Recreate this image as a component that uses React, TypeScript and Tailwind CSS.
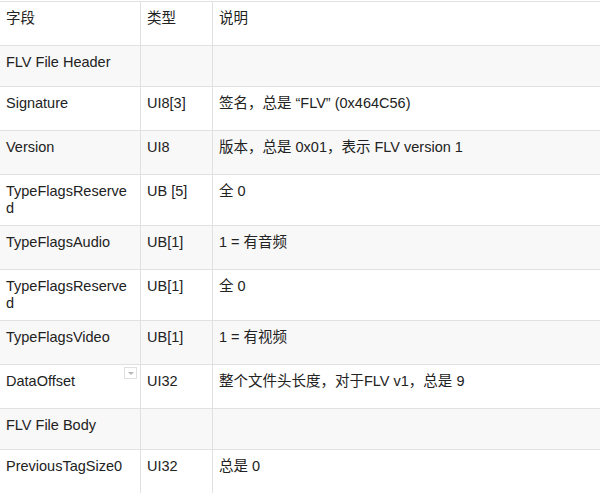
const rows = [
  { f: '字段', t: '类型', d: '说明', h: 'h-[44px]', gray: false },
  { f: 'FLV File Header', t: '', d: '', h: 'h-[41px]', gray: true },
  { f: 'Signature', t: 'UI8[3]', d: '签名，总是 “FLV” (0x464C56)', h: 'h-[44px]', gray: false },
  { f: 'Version', t: 'UI8', d: '版本，总是 0x01，表示 FLV version 1', h: 'h-[44px]', gray: true },
  { f: 'TypeFlagsReserved', t: 'UB [5]', d: '全 0', h: 'h-[51px]', gray: false },
  { f: 'TypeFlagsAudio', t: 'UB[1]', d: '1 = 有音频', h: 'h-[44px]', gray: true },
  { f: 'TypeFlagsReserved', t: 'UB[1]', d: '全 0', h: 'h-[51px]', gray: false },
  { f: 'TypeFlagsVideo', t: 'UB[1]', d: '1 = 有视频', h: 'h-[44px]', gray: true },
  { f: 'DataOffset', t: 'UI32', d: '整个文件头长度，对于FLV v1，总是 9', h: 'h-[44px]', gray: false, menu: true },
  { f: 'FLV File Body', t: '', d: '', h: 'h-[41px]', gray: true },
  { f: 'PreviousTagSize0', t: 'UI32', d: '总是 0', h: 'h-[44px]', gray: false },
];

export default function App() {
  return (
    <div className="w-[600px] h-[493px] overflow-hidden bg-white pt-px">
      <table
        className="-ml-px w-[720px] table-fixed border-collapse text-[14.5px] leading-[17px] text-[#222]"
        style={{ fontFamily: '"Liberation Sans", Arial, "Noto Sans CJK SC", sans-serif' }}
      >
        <colgroup>
          <col className="w-[141px]" />
          <col className="w-[72px]" />
          <col />
        </colgroup>
        <tbody>
          {rows.map((r, i) => (
            <tr key={i} className={`${r.h} ${r.gray ? 'bg-[#f8f8f8]' : 'bg-white'}`}>
              <td className="relative border border-[#e1e1e1] px-[6px] pt-[8px] pb-0 align-top break-all">
                {r.f}
                {r.menu && (
                  <span className="absolute right-[3px] top-[2px] flex h-[12px] w-[13px] items-center justify-center border border-[#e0e0e0] bg-white">
                    <span className="block h-0 w-0 border-x-[3px] border-t-[3px] border-x-transparent border-t-[#b8b8b8]" />
                  </span>
                )}
              </td>
              <td className="border border-[#e1e1e1] px-[6px] pt-[8px] pb-0 align-top">{r.t}</td>
              <td className="border border-[#e1e1e1] px-[6px] pt-[8px] pb-0 align-top">{r.d}</td>
            </tr>
          ))}
        </tbody>
      </table>
    </div>
  );
}
